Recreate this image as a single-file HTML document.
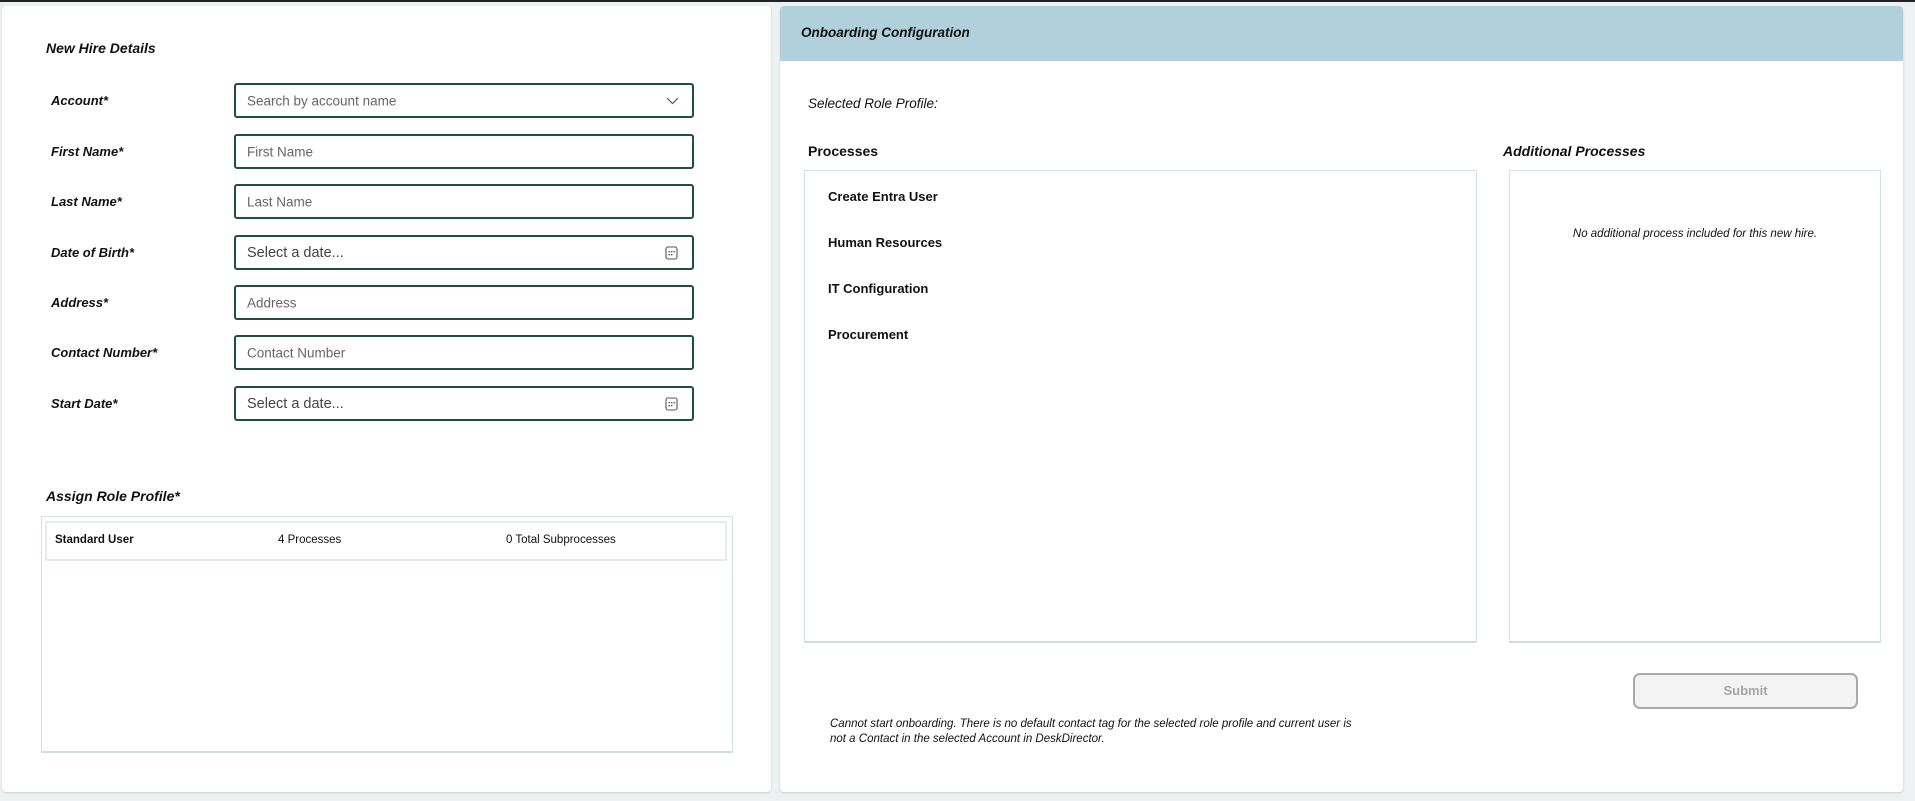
<!DOCTYPE html>
<html><head><meta charset="utf-8"><style>
*{box-sizing:border-box;margin:0;padding:0}
body{width:1915px;height:801px;background:#eef1f2;font-family:"Liberation Sans",sans-serif;position:relative;overflow:hidden;color:#111}
.topline{position:absolute;left:0;top:0;width:1915px;height:2px;background:#222}
.panel{position:absolute;background:#fff;border-radius:4px;box-shadow:0 1px 2px rgba(0,0,0,.15)}
.a{position:absolute;white-space:nowrap}
.lbl{font-weight:bold;font-style:italic;font-size:13px;left:51px}
.inp{position:absolute;left:234px;width:460px;height:35px;border:2px solid #1f4e4a;border-radius:3px;background:#fff}
.inp span{position:absolute;left:11px;top:50%;transform:translateY(-50%);font-size:13.5px;color:#666}
.box{position:absolute;border:1px solid #d8e0e2;border-bottom:2px solid #d3dcdf}
.item{position:absolute;left:828px;font-weight:bold;font-size:13px}
</style></head><body>
<div class="topline"></div>
<div class="panel" style="left:2px;top:6px;width:769px;height:786px"></div>
<div class="panel" style="left:780px;top:6px;width:1123px;height:786px;overflow:hidden"><div style="height:55px;background:#b0d0db"></div></div>

<div class="a" style="left:46px;top:40px;font-weight:bold;font-style:italic;font-size:14px">New Hire Details</div>

<div class="a lbl" style="top:93px">Account*</div>
<div class="inp" style="top:83px"><span>Search by account name</span>
<svg style="position:absolute;right:13px;top:11px" width="13" height="9" viewBox="0 0 13 9"><path d="M1 2l5.5 5.5L12 2" fill="none" stroke="#555" stroke-width="1.2"/></svg></div>
<div class="a lbl" style="top:144px">First Name*</div>
<div class="inp" style="top:134px"><span>First Name</span></div>
<div class="a lbl" style="top:194px">Last Name*</div>
<div class="inp" style="top:184px"><span>Last Name</span></div>
<div class="a lbl" style="top:245px">Date of Birth*</div>
<div class="inp" style="top:235px"><span style="font-size:14.5px;color:#444">Select a date...</span>
<svg style="position:absolute;right:14px;top:9px" width="13" height="14" viewBox="0 0 13 14"><rect x="1" y="1" width="11" height="12" rx="2" fill="none" stroke="#555" stroke-width="1.1"/><g fill="#555"><rect x="3.5" y="5" width="1.4" height="1.4"/><rect x="6" y="5" width="1.4" height="1.4"/><rect x="8.5" y="5" width="1.4" height="1.4"/><rect x="3.5" y="8" width="1.4" height="1.4"/><rect x="6" y="8" width="1.4" height="1.4"/></g></svg></div>
<div class="a lbl" style="top:295px">Address*</div>
<div class="inp" style="top:285px"><span>Address</span></div>
<div class="a lbl" style="top:345px">Contact Number*</div>
<div class="inp" style="top:335px"><span>Contact Number</span></div>
<div class="a lbl" style="top:396px">Start Date*</div>
<div class="inp" style="top:386px"><span style="font-size:14.5px;color:#444">Select a date...</span>
<svg style="position:absolute;right:14px;top:9px" width="13" height="14" viewBox="0 0 13 14"><rect x="1" y="1" width="11" height="12" rx="2" fill="none" stroke="#555" stroke-width="1.1"/><g fill="#555"><rect x="3.5" y="5" width="1.4" height="1.4"/><rect x="6" y="5" width="1.4" height="1.4"/><rect x="8.5" y="5" width="1.4" height="1.4"/><rect x="3.5" y="8" width="1.4" height="1.4"/><rect x="6" y="8" width="1.4" height="1.4"/></g></svg></div>

<div class="a" style="left:46px;top:488px;font-weight:bold;font-style:italic;font-size:14px">Assign Role Profile*</div>
<div class="box" style="left:41px;top:516px;width:692px;height:237px"></div>
<div style="position:absolute;left:45px;top:521px;width:682px;height:40px;border:2px solid #e6ebee;background:#fff"></div>
<div class="a" style="left:55px;top:534px;font-size:11.5px;font-weight:bold">Standard User</div>
<div class="a" style="left:278px;top:534px;font-size:11.5px">4 Processes</div>
<div class="a" style="left:506px;top:534px;font-size:11.5px">0 Total Subprocesses</div>

<div class="a" style="left:801px;top:25px;font-weight:bold;font-style:italic;font-size:13.5px">Onboarding Configuration</div>
<div class="a" style="left:808px;top:96px;font-style:italic;font-size:13.5px">Selected Role Profile:</div>
<div class="a" style="left:808px;top:143px;font-weight:bold;font-size:14px">Processes</div>
<div class="a" style="left:1503px;top:143px;font-weight:bold;font-style:italic;font-size:14px">Additional Processes</div>
<div class="box" style="left:804px;top:170px;width:673px;height:473px"></div>
<div class="box" style="left:1509px;top:170px;width:372px;height:473px"></div>
<div class="item" style="top:189px">Create Entra User</div>
<div class="item" style="top:235px">Human Resources</div>
<div class="item" style="top:281px">IT Configuration</div>
<div class="item" style="top:327px">Procurement</div>
<div class="a" style="left:1509px;width:372px;text-align:center;top:228px;font-style:italic;font-size:11.5px">No additional process included for this new hire.</div>

<div style="position:absolute;left:1633px;top:673px;width:225px;height:36px;border:2px solid #a9a9a9;border-radius:7px;background:#f3f3f3;color:#a6a6a6;font-weight:bold;font-size:13px;text-align:center;line-height:32px">Submit</div>
<div class="a" style="left:830px;top:717px;font-style:italic;font-size:11.5px;line-height:15px">Cannot start onboarding. There is no default contact tag for the selected role profile and current user is<br>not a Contact in the selected Account in DeskDirector.</div>
</body></html>
